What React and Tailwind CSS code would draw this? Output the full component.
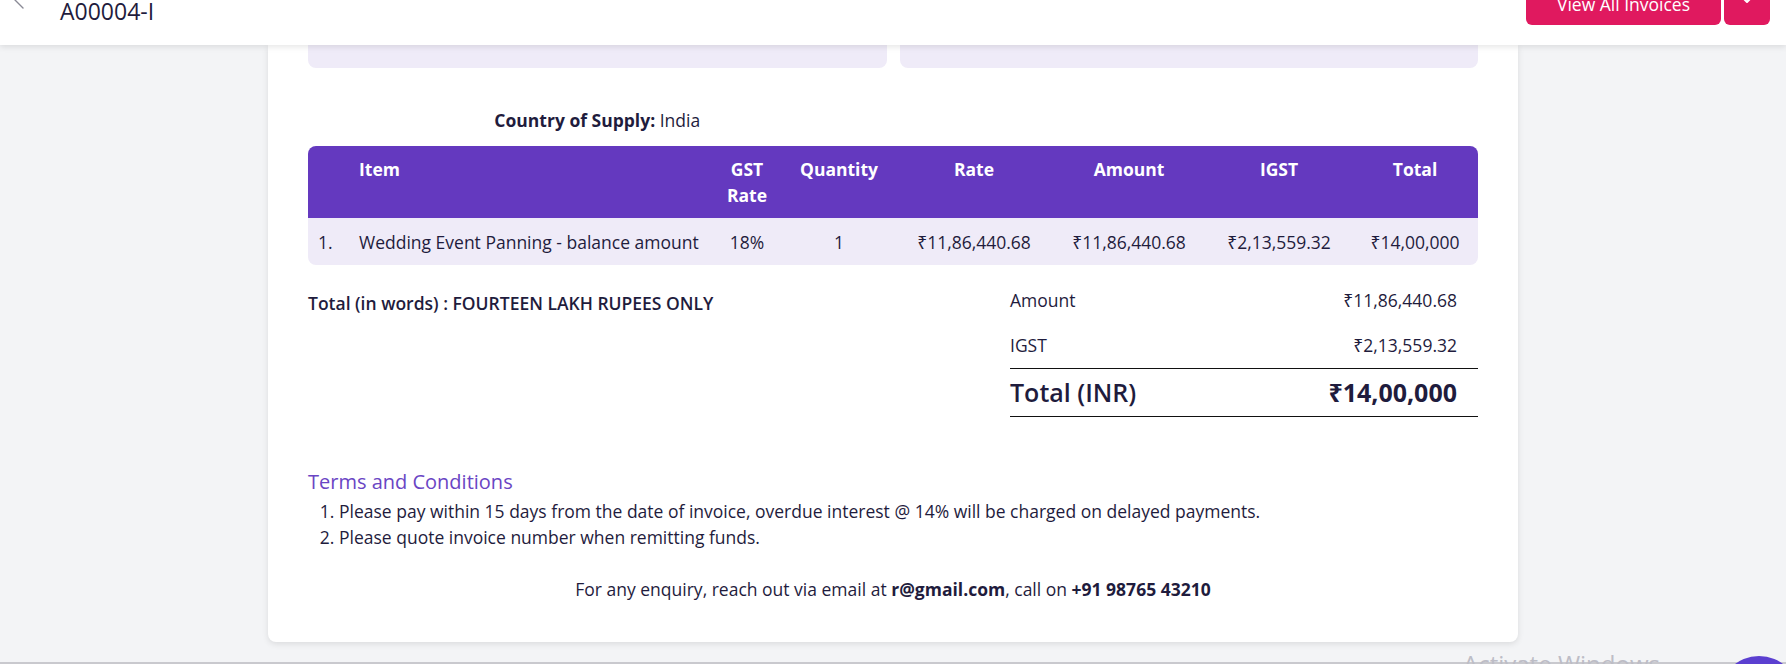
import React from "react";

function ChevronLeft() {
  return (
    <svg width="20" height="20" viewBox="0 0 20 20" className="mt-[-10px] ml-[12px] shrink-0" fill="none" stroke="#8a8a96" strokeWidth="1.4" strokeLinecap="round" strokeLinejoin="round">
      <polyline points="11,2 3,10 11,18" />
    </svg>
  );
}

function ChevronDown() {
  return (
    <svg width="14" height="14" viewBox="0 0 14 14" fill="none" stroke="#ffffff" strokeWidth="2" strokeLinecap="round" strokeLinejoin="round">
      <polyline points="3,5 7,9 11,5" />
    </svg>
  );
}

export default function App() {
  const rows = [
    { no: "1.", item: "Wedding Event Panning - balance amount", gst: "18%", qty: "1", rate: "₹11,86,440.68", amount: "₹11,86,440.68", igst: "₹2,13,559.32", total: "₹14,00,000" },
  ];

  return (
    <div className="relative flex h-[664px] w-full flex-col overflow-hidden bg-[#f3f4f6] font-['Open_Sans','Noto_Sans',sans-serif] text-[#1f1c3d]">
      <header className="relative z-10 flex h-[45px] shrink-0 items-start justify-between overflow-hidden bg-white shadow-[0_2px_6px_rgba(0,0,0,0.10)]">
        <div className="flex items-start">
          <ChevronLeft />
          <h1 className="ml-[28px] mt-[-5px] text-[23px] font-normal leading-[32px] text-[#1f1c3d]">A00004-I</h1>
        </div>
        <div className="mr-[16px] flex gap-[3px]">
          <button className="mt-[-17px] flex h-[42px] w-[195px] items-center justify-center rounded-md bg-[#e0195f] text-[17.5px] font-normal text-white">
            View All Invoices
          </button>
          <button className="mt-[-17px] flex h-[42px] w-[46px] items-center justify-center rounded-md bg-[#e0195f]">
            <span className="-translate-y-[4px]">
              <ChevronDown />
            </span>
          </button>
        </div>
      </header>

      <main className="flex justify-center">
        <div className="w-[1250px] rounded-b-lg bg-white px-10 pb-[41px] shadow-[0_2px_6px_rgba(0,0,0,0.10)]">
          <div className="grid grid-cols-2 gap-[13px]">
            <div className="h-[23px] rounded-b-lg bg-[#efebf8]" />
            <div className="h-[23px] rounded-b-lg bg-[#efebf8]" />
          </div>

          <div className="mt-[40px] grid grid-cols-2 gap-[13px]">
            <p className="text-center text-[17.5px] leading-6">
              <span className="font-bold">Country of Supply:</span> India
            </p>
            <div />
          </div>

          <div className="mt-[14px] overflow-hidden rounded-lg">
            <table className="w-full table-fixed border-collapse text-[17.5px] leading-6">
              <colgroup>
                <col className="w-[41px]" />
                <col className="w-[363px]" />
                <col className="w-[70px]" />
                <col className="w-[114px]" />
                <col className="w-[156px]" />
                <col className="w-[154px]" />
                <col className="w-[146px]" />
                <col className="w-[126px]" />
              </colgroup>
              <thead>
                <tr className="bg-[#6439bf] text-white">
                  <th className="py-[10px] pl-[10px] text-left align-top font-bold leading-[26px]"></th>
                  <th className="py-[10px] pl-[10px] text-left align-top font-bold leading-[26px]">Item</th>
                  <th className="py-[10px] text-center align-top font-bold leading-[26px]">GST<br />Rate</th>
                  <th className="py-[10px] text-center align-top font-bold leading-[26px]">Quantity</th>
                  <th className="py-[10px] text-center align-top font-bold leading-[26px]">Rate</th>
                  <th className="py-[10px] text-center align-top font-bold leading-[26px]">Amount</th>
                  <th className="py-[10px] text-center align-top font-bold leading-[26px]">IGST</th>
                  <th className="py-[10px] text-center align-top font-bold leading-[26px]">Total</th>
                </tr>
              </thead>
              <tbody>
                {rows.map((r) => (
                  <tr key={r.no} className="bg-[#efebf8]">
                    <td className="py-[11.5px] pl-[10px] text-left">{r.no}</td>
                    <td className="py-[11.5px] pl-[10px] text-left whitespace-nowrap">{r.item}</td>
                    <td className="py-[11.5px] text-center">{r.gst}</td>
                    <td className="py-[11.5px] text-center">{r.qty}</td>
                    <td className="py-[11.5px] text-center">{r.rate}</td>
                    <td className="py-[11.5px] text-center">{r.amount}</td>
                    <td className="py-[11.5px] text-center">{r.igst}</td>
                    <td className="py-[11.5px] text-center">{r.total}</td>
                  </tr>
                ))}
              </tbody>
            </table>
          </div>

          <div className="mt-[13px] flex justify-between">
            <p className="pt-[13px] text-[17.5px] font-semibold leading-6">
              Total (in words) : FOURTEEN LAKH RUPEES ONLY
            </p>
            <div className="w-[468px]">
              <div className="flex h-[45px] items-center justify-between pr-[21px] text-[17.5px]">
                <span>Amount</span>
                <span>₹11,86,440.68</span>
              </div>
              <div className="flex h-[45px] items-center justify-between pr-[21px] text-[17.5px]">
                <span>IGST</span>
                <span>₹2,13,559.32</span>
              </div>
              <div className="flex h-[49px] items-center justify-between border-y border-[#111111] pr-[21px] text-[25px] font-semibold">
                <span>Total (INR)</span>
                <span className="font-bold">₹14,00,000</span>
              </div>
            </div>
          </div>

          <h3 className="mt-[51px] text-[20px] font-normal leading-[27px] text-[#6a45c4]">Terms and Conditions</h3>
          <ol className="mt-[3px] list-decimal pl-[31px] text-[17.5px] leading-[26px]">
            <li>Please pay within 15 days from the date of invoice, overdue interest @ 14% will be charged on delayed payments.</li>
            <li>Please quote invoice number when remitting funds.</li>
          </ol>

          <p className="mt-[27px] text-center text-[17.5px] leading-6">
            For any enquiry, reach out via email at <span className="font-bold">r@gmail.com</span>, call on <span className="font-bold">+91 98765 43210</span>
          </p>
        </div>
      </main>

      <div className="flex-1" />
      <div className="h-[2px] w-full bg-[#c9c9ce]" />

      <div className="pointer-events-none absolute left-[1463px] top-[652px] whitespace-nowrap text-[24px] leading-none text-[#bdbdc6]">
        Activate Windows
      </div>
      <div className="absolute left-[1719px] top-[656px] h-[80px] w-[80px] rounded-full bg-[#5b3fd0]" />
    </div>
  );
}
